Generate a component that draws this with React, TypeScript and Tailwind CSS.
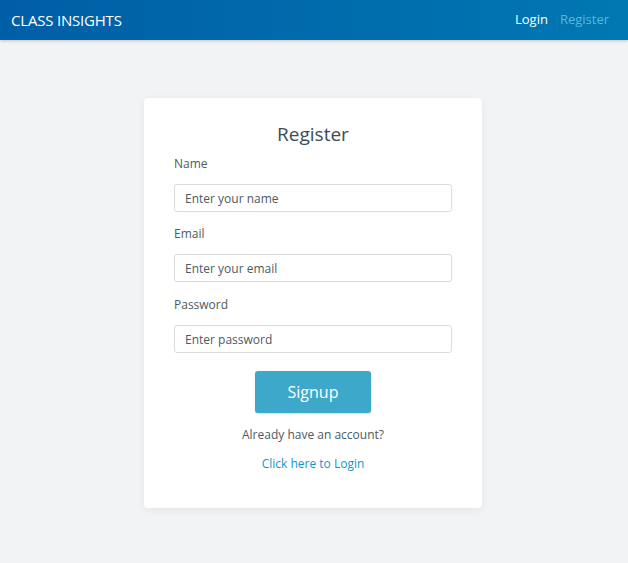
export default function App() {
	return (
		<div className="min-h-[563px] bg-[#f2f3f5] font-['Open_Sans',sans-serif]">
			<header className="h-10 flex items-center justify-between pl-[11px] pr-[19px] bg-gradient-to-r from-[#005ea6] to-[#0078b2] shadow-[0_1px_3px_rgba(0,0,0,0.2)]">
				<span className="text-white text-[15px] tracking-[-0.2px]">CLASS INSIGHTS</span>
				<nav className="flex gap-3 text-[13px]">
					<a className="text-white">Login</a>
					<a className="text-[#56b8dc]">Register</a>
				</nav>
			</header>

			<div className="flex justify-center pt-[58px] pr-[2px]">
				<div className="w-[338px] bg-white rounded-[4px] shadow-[0_2px_8px_rgba(0,0,0,0.06)] px-[30px] pt-[22px] pb-[35px] flex flex-col">
					<h1 className="text-center text-[19px] text-[#3b4c57] leading-[28px]">Register</h1>

					<label className="text-[12px] text-[#4d5a63] mt-[7px] leading-[18px]">Name</label>
					<input
						className="mt-[11px] h-[28px] border border-[#d8dcdf] rounded-[3px] px-[10px] text-[12px] outline-none placeholder:text-[#4d5a63]"
						placeholder="Enter your name"
					/>

					<label className="text-[12px] text-[#4d5a63] mt-[13px] leading-[18px]">Email</label>
					<input
						className="mt-[11px] h-[28px] border border-[#d8dcdf] rounded-[3px] px-[10px] text-[12px] outline-none placeholder:text-[#4d5a63]"
						placeholder="Enter your email"
					/>

					<label className="text-[12px] text-[#4d5a63] mt-[14px] leading-[18px]">Password</label>
					<input
						type="password"
						className="mt-[11px] h-[28px] border border-[#d8dcdf] rounded-[3px] px-[10px] text-[12px] outline-none placeholder:text-[#4d5a63]"
						placeholder="Enter password"
					/>

					<button className="self-center mt-[18px] w-[116px] h-[42px] rounded-[3px] bg-[#3ea8cb] text-white text-[16px] shadow-[0_1px_2px_rgba(0,0,0,0.15)]">
						Signup
					</button>

					<p className="text-center text-[12px] text-[#4d5a63] mt-[13px] leading-[18px]">Already have an account?</p>
					<a className="text-center text-[12px] text-[#0a9ad0] mt-[11px] leading-[18px]">Click here to Login</a>
				</div>
			</div>
		</div>
	);
}
